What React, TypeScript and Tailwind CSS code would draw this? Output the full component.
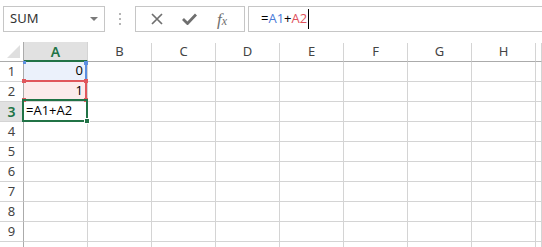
import { Fragment } from 'react'

const cols = ['A', 'B', 'C', 'D', 'E', 'F', 'G', 'H', '']
const rows = [1, 2, 3, 4, 5, 6, 7, 8, 9, 10]

const green = 'bg-[#217346]'

function Toolbar() {
  return (
    <div className="flex h-[42px] items-start pl-[3px] pt-[6px] font-['Noto_Sans',sans-serif]">
      <div className="flex h-[26px] w-[102px] items-center justify-between border border-[#c6c6c6] pl-[6px] pr-[6px] text-[13px] text-[#333]">
        <span>SUM</span>
        <svg width="8" height="5" viewBox="0 0 8 5">
          <polygon points="0,0 8,0 4,4" fill="#7a7a7a" />
        </svg>
      </div>
      <div className="flex h-[26px] w-[30px] flex-col items-center justify-center gap-[3px]">
        <span className="h-[2px] w-[2px] bg-[#b5b5b5]" />
        <span className="h-[2px] w-[2px] bg-[#b5b5b5]" />
        <span className="h-[2px] w-[2px] bg-[#b5b5b5]" />
      </div>
      <div className="flex h-[26px] w-[110px] items-center border border-[#c6c6c6]">
        <div className="flex w-[38px] justify-center pl-[4px]">
          <svg width="12" height="12" viewBox="0 0 12 12">
            <path d="M1 1 L11 11 M11 1 L1 11" stroke="#6f6f6f" strokeWidth="1.7" />
          </svg>
        </div>
        <div className="flex w-[30px] justify-center">
          <svg width="15" height="12" viewBox="0 0 15 12">
            <path d="M1 6 L5.5 10.5 L14 1.5" stroke="#6f6f6f" strokeWidth="2.8" fill="none" />
          </svg>
        </div>
        <div className="flex flex-1 items-center justify-center pr-[4px] font-['Liberation_Serif',serif] italic text-[#6f6f6f]">
          <span className="text-[17px] leading-none">f</span>
          <span className="mt-[4px] text-[12px] leading-none">x</span>
        </div>
      </div>
      <div className="ml-[3px] flex h-[26px] flex-1 items-center border-y border-l border-[#c6c6c6] pl-[12px] font-['Open_Sans',sans-serif] text-[13px] text-black">
        <span>=</span>
        <span className="text-[#4a7bd8]">A1</span>
        <span>+</span>
        <span className="text-[#e0505a]">A2</span>
        <span className="ml-[1px] h-[20px] w-px bg-black" />
      </div>
    </div>
  )
}

function Sheet() {
  return (
    <div className="relative">
      <div className="grid grid-cols-[24px_repeat(8,64px)_1fr] grid-rows-[20px] auto-rows-[20px]">
        <div className="relative border-r border-b border-[#ababab]">
          <svg className="absolute left-[7px] top-[3px]" width="14" height="14" viewBox="0 0 14 14">
            <polygon points="13,0 13,13 0,13" fill="#dfdfdf" />
          </svg>
        </div>
        {cols.map((c, i) =>
          c === 'A' ? (
            <div
              key={i}
              className="flex items-center justify-center border-r border-b-2 border-r-[#d4d4d4] border-b-[#217346] bg-[#e1e1e1] pt-[1px] font-['Noto_Sans',sans-serif] text-[14px] font-semibold text-[#217346]"
            >
              {c}
            </div>
          ) : (
            <div
              key={i}
              className="mt-[1px] flex items-center justify-center border-r border-b border-r-[#d4d4d4] border-b-[#ababab] font-['Noto_Sans',sans-serif] text-[13px] text-[#444]"
            >
              {c}
            </div>
          )
        )}
        {rows.map(r => (
          <Fragment key={r}>
            <div
              className={
                r === 3
                  ? "flex items-center justify-center border-r border-b border-r-[#ababab] border-b-[#d4d4d4] bg-[#e1e1e1] font-['Noto_Sans',sans-serif] text-[14px] font-semibold text-[#217346]"
                  : "flex items-center justify-center border-r border-b border-r-[#ababab] border-b-[#d4d4d4] font-['Noto_Sans',sans-serif] text-[13px] text-[#444]"
              }
            >
              {r < 10 ? r : null}
            </div>
            {cols.map((c, i) => {
              const base = "border-r border-b border-[#d4d4d4] font-['Open_Sans',sans-serif] text-[13px] text-black flex items-end pb-[1px]"
              if (c === 'A' && r === 1)
                return (
                  <div key={i} className={`${base} justify-end bg-[#ebf1fb] pr-[4px]`}>
                    0
                  </div>
                )
              if (c === 'A' && r === 2)
                return (
                  <div key={i} className={`${base} justify-end bg-[#fcebeb] pr-[4px]`}>
                    1
                  </div>
                )
              if (c === 'A' && r === 3)
                return (
                  <div key={i} className={`${base} pl-[2px]`}>
                    =A1+A2
                  </div>
                )
              return <div key={i} className={base} />
            })}
          </Fragment>
        ))}
      </div>

      {/* A1 reference range */}
      <div className="absolute left-[85px] top-[20px] h-[19px] w-[2px] bg-[#5b8ee0]" />
      <div className="absolute left-[23px] top-[19px] h-[3px] w-[3px] bg-[#5b8ee0]" />
      <div className="absolute left-[84px] top-[19px] h-[4px] w-[4px] bg-[#5b8ee0]" />

      {/* A2 reference range */}
      <div className="absolute left-[24px] top-[38px] h-[2px] w-[63px] bg-[#e0575c]" />
      <div className="absolute left-[85px] top-[38px] h-[20px] w-[2px] bg-[#e0575c]" />
      <div className="absolute left-[22px] top-[37px] h-[4px] w-[4px] bg-[#e0575c]" />
      <div className="absolute left-[84px] top-[37px] h-[4px] w-[4px] bg-[#e0575c]" />
      <div className="absolute left-[22px] top-[56px] h-[4px] w-[4px] bg-[#e0575c]" />
      <div className="absolute left-[84px] top-[56px] h-[4px] w-[4px] bg-[#e0575c]" />

      {/* active cell A3 */}
      <div className="absolute left-[22px] top-[57px] h-[23px] w-[66px] border-2 border-[#217346]" />
      <div className={`absolute left-[84px] top-[76px] h-[6px] w-[6px] border border-white ${green}`} />
    </div>
  )
}

export default function App() {
  return (
    <div className="h-[247px] w-[542px] overflow-hidden bg-white">
      <Toolbar />
      <Sheet />
    </div>
  )
}
